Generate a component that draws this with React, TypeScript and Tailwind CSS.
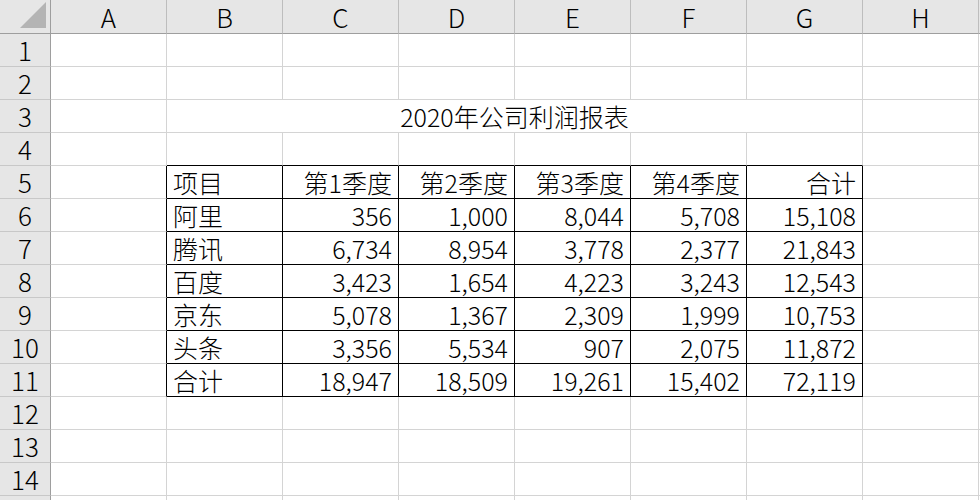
const cols = ["A", "B", "C", "D", "E", "F", "G", "H", "I"];

const table: string[][] = [
  ["项目", "第1季度", "第2季度", "第3季度", "第4季度", "合计"],
  ["阿里", "356", "1,000", "8,044", "5,708", "15,108"],
  ["腾讯", "6,734", "8,954", "3,778", "2,377", "21,843"],
  ["百度", "3,423", "1,654", "4,223", "3,243", "12,543"],
  ["京东", "5,078", "1,367", "2,309", "1,999", "10,753"],
  ["头条", "3,356", "5,534", "907", "2,075", "11,872"],
  ["合计", "18,947", "18,509", "19,261", "15,402", "72,119"],
];

const rowCount = 15;

// row/col numbers are 1-based; col 1 = A
function cellValue(r: number, c: number): string {
  if (r >= 5 && r <= 11 && c >= 2 && c <= 7) return table[r - 5][c - 2];
  return "";
}

function Cell({ r, c }: { r: number; c: number }) {
  const inTable = r >= 5 && r <= 11 && c >= 2 && c <= 7;
  const rightBlack = r >= 5 && r <= 11 && c >= 1 && c <= 7;
  const bottomBlack = r >= 4 && r <= 11 && c >= 2 && c <= 7;
  const text = cellValue(r, c);
  return (
    <div
      className={`flex items-end whitespace-nowrap border-r border-b px-[6px] pb-[1px] text-[25px] font-light leading-[30px] text-black ${
        rightBlack ? "border-r-black" : "border-r-[#d4d4d4]"
      } ${bottomBlack ? "border-b-black" : "border-b-[#d4d4d4]"} ${
        inTable && c !== 2 ? "justify-end" : "justify-start"
      }`}
    >
      {text}
    </div>
  );
}

export default function App() {
  const rows = Array.from({ length: rowCount }, (_, i) => i + 1);
  return (
    <div
      className="w-[980px] h-[500px] overflow-hidden bg-white"
      style={{ fontFamily: '"Noto Sans CJK SC", "Noto Sans", sans-serif' }}
    >
      <div className="grid grid-cols-[51px_repeat(9,116px)] grid-rows-[34px_repeat(15,33px)]">
        {/* select-all corner */}
        <div className="relative border-r border-b border-r-[#9e9e9e] border-b-[#9e9e9e] bg-[#e6e6e6]">
          <svg className="absolute right-[4px] bottom-[5px]" width="26" height="26" viewBox="0 0 26 26">
            <polygon points="26,0 26,26 0,26" fill="#b4b4b4" />
          </svg>
        </div>
        {cols.map((l) => (
          <div
            key={l}
            className="flex items-center justify-center border-r border-b border-r-[#bdbdbd] border-b-[#9e9e9e] bg-[#e6e6e6] text-[26px] font-light leading-[33px] text-black"
          >
            {l}
          </div>
        ))}

        {rows.map((r) => (
          <div key={r} className="contents">
            <div className="flex items-center justify-center border-r border-b border-r-[#9e9e9e] border-b-[#c8c8c8] bg-[#e6e6e6] text-[26px] font-light leading-[32px] text-black">
              {r}
            </div>
            {r === 3 ? (
              <>
                <Cell r={3} c={1} />
                <div className="col-span-6 flex items-end justify-center border-r border-b border-r-[#d4d4d4] border-b-[#d4d4d4] pb-[1px] text-[25px] font-light leading-[30px] text-black">
                  2020年公司利润报表
                </div>
                <Cell r={3} c={8} />
                <Cell r={3} c={9} />
              </>
            ) : (
              cols.map((_, i) => <Cell key={i} r={r} c={i + 1} />)
            )}
          </div>
        ))}
      </div>
    </div>
  );
}
